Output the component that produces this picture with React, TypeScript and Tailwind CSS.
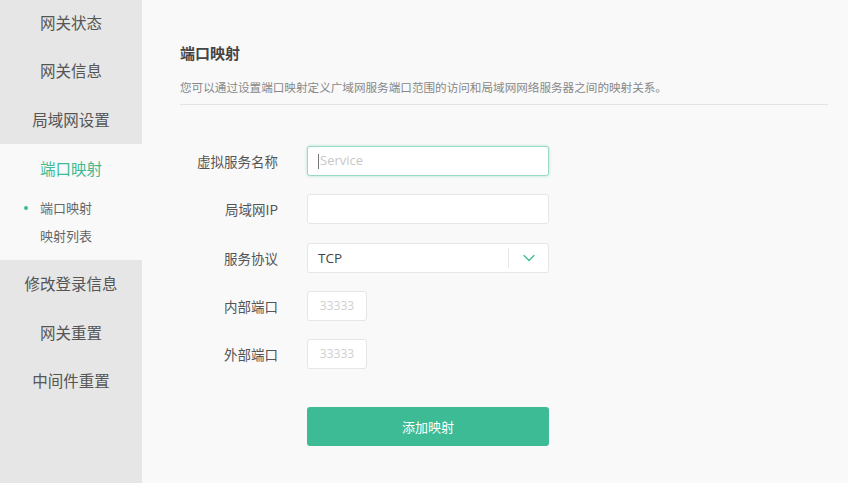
import { ChevronDown } from 'lucide-react'

const font = { fontFamily: '"Noto Sans CJK SC", "Open Sans", sans-serif' }

const topItems = ['网关状态', '网关信息', '局域网设置']
const bottomItems = ['修改登录信息', '网关重置', '中间件重置']

function NavItem({ label }: { label: string }) {
  return (
    <div className="h-[48.5px] flex items-center justify-center text-[15.5px] text-[#555]">
      {label}
    </div>
  )
}

function Row({ label, children }: { label: string; children: React.ReactNode }) {
  return (
    <div className="flex items-center h-[48.3px]">
      <div className="w-[98px] text-right text-[13.5px] text-[#555]">{label}</div>
      <div className="ml-[29px]">{children}</div>
    </div>
  )
}

export default function App() {
  return (
    <div className="flex w-[848px] h-[483px] bg-[#f9f9f9] overflow-hidden" style={font}>
      {/* Sidebar */}
      <div className="w-[142px] flex flex-col shrink-0">
        <div className="bg-[#e6e6e6] -mt-[2px]">
          {topItems.map((t) => (
            <NavItem key={t} label={t} />
          ))}
        </div>
        <div className="bg-[#f9f9f9] h-[116px] flex flex-col">
          <div className="h-[50px] flex items-center justify-center text-[15.5px] text-[#3dbb94]">端口映射</div>
          <div className="flex items-center h-[28px] pl-[24px] text-[13px] text-[#666]">
            <span className="w-[4px] h-[4px] rounded-full bg-[#3dbb94] mr-[12px]" />
            端口映射
          </div>
          <div className="flex items-center h-[28px] pl-[40px] text-[13px] text-[#666]">映射列表</div>
        </div>
        <div className="bg-[#e6e6e6] flex-1">
          {bottomItems.map((t) => (
            <NavItem key={t} label={t} />
          ))}
        </div>
      </div>

      {/* Main */}
      <div className="flex-1 pl-[38px] pr-[20px] pt-[40px]">
        <div className="text-[15px] font-semibold text-[#444] leading-[26px]">端口映射</div>
        <div className="mt-[12px] text-[11.6px] text-[#888] leading-[18px]">
          您可以通过设置端口映射定义广域网服务端口范围的访问和局域网网络服务器之间的映射关系。
        </div>
        <div className="mt-[8px] h-px bg-[#e3e3e3]" />

        <div className="mt-[32px] flex flex-col">
          <Row label="虚拟服务名称">
            <div className="w-[242px] h-[30px] rounded-[3px] border border-[#9ad9c7] bg-white shadow-[0_0_3px_#a8e2d2] flex items-center pl-[10px]">
              <span className="w-px h-[15px] bg-[#777] mr-[1px]" />
              <span className="text-[13px] text-[#c8c8c8]" style={{ fontFamily: '"Open Sans", sans-serif' }}>Service</span>
            </div>
          </Row>
          <Row label="局域网IP">
            <div className="w-[242px] h-[30px] rounded-[3px] border border-[#e6e6e6] bg-white" />
          </Row>
          <Row label="服务协议">
            <div className="w-[242px] h-[30px] rounded-[3px] border border-[#e6e6e6] bg-white flex items-center">
              <span className="flex-1 pl-[10px] text-[13.5px] text-[#444]" style={{ fontFamily: '"Open Sans", sans-serif' }}>TCP</span>
              <span className="w-px h-[20px] bg-[#e6e6e6]" />
              <span className="w-[39px] flex items-center justify-center">
                <ChevronDown size={20} strokeWidth={1.5} className="text-[#3dbb94]" />
              </span>
            </div>
          </Row>
          <Row label="内部端口">
            <div className="w-[60px] h-[30px] rounded-[3px] border border-[#e6e6e6] bg-white flex items-center justify-center text-[12px] text-[#d0d0d0]" style={{ fontFamily: '"Open Sans", sans-serif' }}>
              33333
            </div>
          </Row>
          <Row label="外部端口">
            <div className="w-[60px] h-[30px] rounded-[3px] border border-[#e6e6e6] bg-white flex items-center justify-center text-[12px] text-[#d0d0d0]" style={{ fontFamily: '"Open Sans", sans-serif' }}>
              33333
            </div>
          </Row>
          <div className="mt-[29px] ml-[127px]">
            <button className="w-[242px] h-[39px] rounded-[3px] bg-[#3dbb94] text-white text-[13px]">添加映射</button>
          </div>
        </div>
      </div>
    </div>
  )
}
